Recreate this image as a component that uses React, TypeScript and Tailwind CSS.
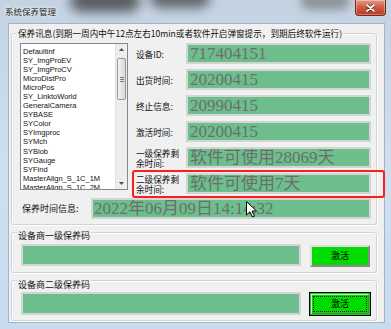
import React from "react";

const items = [
  "Defaultinf",
  "SY_ImgProEV",
  "SY_ImgProCV",
  "MicroDistPro",
  "MicroPos",
  "SY_LinktoWorld",
  "GeneralCamera",
  "SYBASE",
  "SYColor",
  "SYImgproc",
  "SYMch",
  "SYBlob",
  "SYGauge",
  "SYFind",
  "MasterAlign_S_1C_1M",
  "MasterAlign_S_1C_2M",
];

const rows: { label: React.ReactNode; value: string; mark?: boolean }[] = [
  { label: "设备ID:", value: "717404151" },
  { label: "出货时间:", value: "20200415" },
  { label: "终止信息:", value: "20990415" },
  { label: "激活时间:", value: "20200415" },
  { label: <>一级保养剩<br />余时间:</>, value: "软件可使用28069天" },
  { label: <>二级保养剩<br />余时间:</>, value: "软件可使用7天", mark: true },
];

const cjk = "font-['Noto_Sans_CJK_SC','Liberation_Sans',sans-serif]";
const field =
  "flex items-center bg-[#6dbe8c] border-2 border-[#d2d6d3] text-[#6a6f6b] text-[17px] leading-none whitespace-nowrap overflow-hidden font-['Liberation_Serif','Noto_Sans_CJK_SC',serif]";
const group =
  "relative border border-[#cdd4d8] rounded-[3px] shadow-[inset_1px_1px_0_#ffffff,1px_1px_0_#ffffff]";

function Arrow({ down }: { down?: boolean }) {
  return (
    <div className="h-[11px] flex items-center justify-center">
      <svg width="5" height="3" viewBox="0 0 5 3">
        <path d={down ? "M0 0H5L2.5 3Z" : "M0 3H5L2.5 0Z"} fill="#4d4d4d" />
      </svg>
    </div>
  );
}

function Button({ focused }: { focused?: boolean }) {
  if (focused) {
    return (
      <div className="w-[62px] h-[24px] border border-black bg-[#00dc00] p-[1px]">
        <div className="h-full border border-t-[#e6e6e6] border-l-[#e6e6e6] border-b-[#6e6e6e] border-r-[#6e6e6e] p-[1px]">
          <div className={`h-full flex items-center justify-center border border-dotted border-[#1a1a1a] text-[9px] text-black ${cjk}`}>
            激活
          </div>
        </div>
      </div>
    );
  }
  return (
    <div
      className={`mt-[1px] w-[60px] h-[22px] flex items-center justify-center bg-[#00dc00] border-2 border-t-[#dcdcdc] border-l-[#dcdcdc] border-b-[#8a8a8a] border-r-[#8a8a8a] text-[9px] text-black ${cjk}`}
    >
      激活
    </div>
  );
}

export default function App() {
  return (
    <div className="relative w-[391px] h-[329px] overflow-hidden bg-gradient-to-b from-[#c4d3e2] via-[#cfdff0] to-[#c8dbef]">
      {/* title bar */}
      <div className="relative h-[23px] flex items-start justify-between overflow-hidden">
        <div className="absolute left-[70px] -top-[10px] w-[70px] h-[22px] rounded-full bg-[#2a2a2a] opacity-70 blur-[6px]" />
        <div className="absolute left-[150px] -top-[12px] w-[60px] h-[20px] rounded-full bg-[#1c1c1c] opacity-60 blur-[6px]" />
        <div className="absolute left-[300px] -top-[8px] w-[50px] h-[18px] rounded-full bg-[#555] opacity-50 blur-[5px]" />
        <div
          className={`relative pl-[5px] h-[23px] flex items-center text-[8.5px] text-[#1b1b1b] [text-shadow:0_0_4px_#ffffff,0_0_2px_#ffffff] ${cjk}`}
        >
          系统保养管理
        </div>
        <div className="relative mr-[5px] w-[31px] h-[16px] rounded-b-[4px] border border-[#7a2617] border-t-0 bg-gradient-to-b from-[#e39a86] via-[#cf5a40] to-[#b8361c] shadow-[inset_0_0_0_1px_rgba(255,255,255,0.35)] flex items-center justify-center">
          <svg width="9" height="8" viewBox="0 0 9 8">
            <path d="M1 1L8 7M8 1L1 7" stroke="#5a1a10" strokeWidth="3" strokeLinecap="round" />
            <path d="M1 1L8 7M8 1L1 7" stroke="#ffffff" strokeWidth="1.8" strokeLinecap="round" />
          </svg>
        </div>
      </div>

      {/* client area */}
      <div className="ml-[8px] w-[377px] h-[300px] bg-[#f0f0f0] border border-[#9fb4c9] pl-[2px] pt-[9px]">
        {/* group 1 */}
        <div className={`${group} w-[366px] pl-[8px] pr-[5px] pt-[9px] pb-[5px]`}>
          <span className={`absolute left-[5px] -top-[7px] px-[1px] bg-[#f0f0f0] text-[8.6px] leading-[12px] text-[#111] whitespace-nowrap ${cjk}`}>
            保养讯息(到期一周内中午12点左右10min或者软件开启弹窗提示，到期后终软件运行)
          </span>
          <div className="flex items-start">
            {/* list box */}
            <div className="flex w-[108px] h-[147px] border border-[#828790] bg-white">
              <div className="flex-1 overflow-hidden pl-[2px] pt-[2.5px] font-['Liberation_Sans',sans-serif] text-[7.5px] leading-[9.1px] text-[#111]">
                {items.map((it) => (
                  <div key={it} className="whitespace-nowrap">
                    {it}
                  </div>
                ))}
              </div>
              <div className="w-[12px] flex flex-col bg-[#ededed] border-l border-[#e2e2e2]">
                <Arrow />
                <div className="mt-[3px] mx-[1px] h-[42px] rounded-[2px] border border-[#979797] bg-gradient-to-r from-[#f4f4f4] to-[#d9d9d9] flex flex-col items-center justify-center gap-[1px]">
                  <div className="w-[4px] h-px bg-[#777]" />
                  <div className="w-[4px] h-px bg-[#777]" />
                  <div className="w-[4px] h-px bg-[#777]" />
                </div>
                <div className="flex-1" />
                <Arrow down />
              </div>
            </div>

            {/* fields */}
            <div className="ml-[8px] flex flex-col gap-[5px]">
              {rows.map((r, i) => (
                <div key={i} className="relative flex items-center h-[21px]">
                  <div className={`w-[50px] text-[8.6px] leading-[10px] text-[#111] whitespace-nowrap ${cjk}`}>
                    {r.label}
                  </div>
                  <div className={`${field} w-[185px] h-[21px] pl-[2px]`}>{r.value}</div>
                  {r.mark && (
                    <div className="absolute -left-[4px] -right-[14px] -top-[3px] -bottom-[4px] border-[2.5px] border-[#ff1c1c] rounded-[3px]" />
                  )}
                </div>
              ))}
            </div>
          </div>

          {/* time info */}
          <div className="mt-[4px] flex items-center h-[21px]">
            <div className={`w-[71px] pl-[2px] text-[9px] text-[#111] whitespace-nowrap ${cjk}`}>保养时间信息:</div>
            <div className={`${field} w-[280px] h-[21px] pl-[1px]`}>2022年06月09日14:14:32</div>
          </div>
        </div>

        {/* group 2 */}
        <div className={`${group} mt-[7px] w-[366px] pl-[9px] pt-[11px] pb-[5px]`}>
          <span className={`absolute left-[5px] -top-[3px] px-[1px] bg-[#f0f0f0] text-[9px] leading-[12px] text-[#111] whitespace-nowrap ${cjk}`}>
            设备商一级保养码
          </span>
          <div className="flex items-start">
            <div className={`${field} w-[280px] h-[22px]`} />
            <div className="ml-[9px]">
              <Button />
            </div>
          </div>
        </div>

        {/* group 3 */}
        <div className={`${group} mt-[7px] w-[366px] pl-[9px] pt-[11px] pb-[4px]`}>
          <span className={`absolute left-[5px] -top-[2px] px-[1px] bg-[#f0f0f0] text-[9px] leading-[12px] text-[#111] whitespace-nowrap ${cjk}`}>
            设备商二级保养码
          </span>
          <div className="flex items-start">
            <div className={`${field} w-[280px] h-[23px]`} />
            <div className="ml-[8px]">
              <Button focused />
            </div>
          </div>
        </div>
      </div>

      {/* mouse pointer */}
      <svg className="absolute left-[246px] top-[201px]" width="11" height="17" viewBox="0 0 11 17">
        <path d="M0.5 0.5V14L4 10.8L6.4 16L8.4 15.1L6.1 10H10.5Z" fill="#ffffff" stroke="#000000" strokeWidth="1" strokeLinejoin="round" />
      </svg>
    </div>
  );
}
